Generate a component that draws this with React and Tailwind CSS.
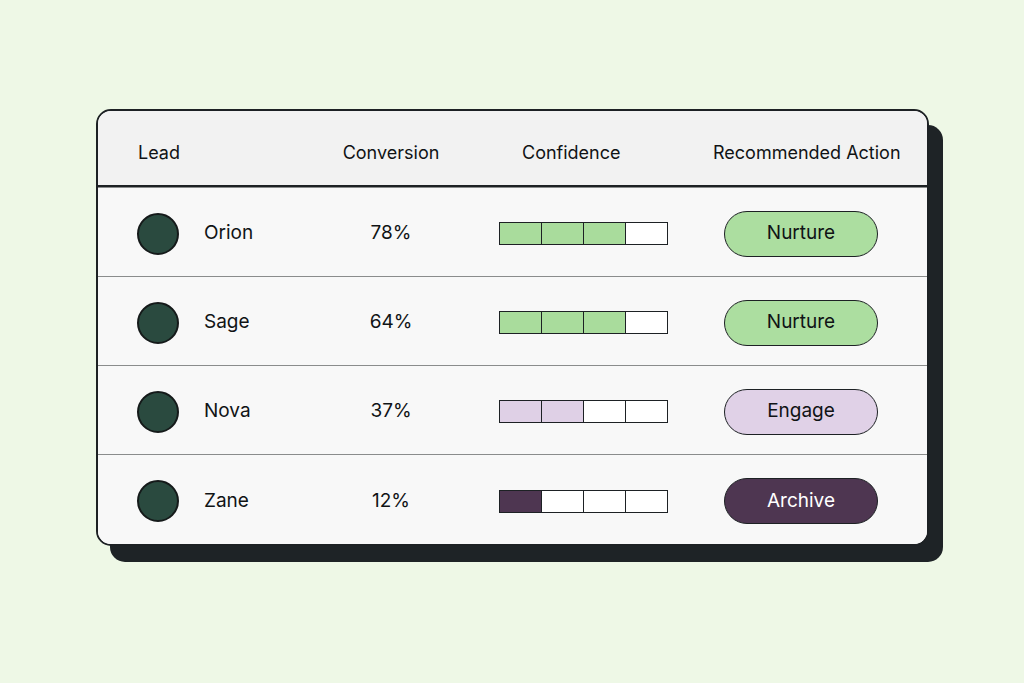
import React from 'react';

const leads = [
  { name: 'Orion', pct: '78%', filled: 3, tone: 'green', action: 'Nurture' },
  { name: 'Sage', pct: '64%', filled: 3, tone: 'green', action: 'Nurture' },
  { name: 'Nova', pct: '37%', filled: 2, tone: 'lilac', action: 'Engage' },
  { name: 'Zane', pct: '12%', filled: 1, tone: 'plum', action: 'Archive' },
];

const segFill = {
  green: 'bg-[#a9dc9c]',
  lilac: 'bg-[#dfd0e6]',
  plum: 'bg-[#4e3651]',
};

const pillStyle = {
  green: 'bg-[#acdea0] text-[#101315]',
  lilac: 'bg-[#e0d1e7] text-[#101315]',
  plum: 'bg-[#4e3651] text-white',
};

function ConfidenceBar({ filled, tone }) {
  return (
    <div className="flex w-[169px] h-[23px] border-[1.5px] border-[#1d2124] bg-white">
      {[0, 1, 2, 3].map((i) => (
        <div
          key={i}
          className={`flex-1 ${i > 0 ? 'border-l-[1.5px] border-[#1d2124]' : ''} ${i < filled ? segFill[tone] : 'bg-white'}`}
        />
      ))}
    </div>
  );
}

function LeadRow({ lead, last }) {
  return (
    <div className={`flex items-center ${last ? 'h-[90px]' : 'h-[89px]'} border-t border-[#8a8c8c] bg-[#f8f8f8] pt-[3px]`}>
      <div className="w-[222px] pl-[39px] flex items-center gap-[25px]">
        <div className="w-[42px] h-[42px] rounded-full bg-[#2a4a3f] border-2 border-[#151a1a]" />
        <span className="text-[19px]">{lead.name}</span>
      </div>
      <div className="w-[142px] text-center text-[19px]">{lead.pct}</div>
      <div className="w-[251px] pl-[37px]">
        <ConfidenceBar filled={lead.filled} tone={lead.tone} />
      </div>
      <div className="flex-1 pl-[11px]">
        <div
          className={`w-[154px] h-[46px] rounded-full border-[1.5px] border-[#1d2124] flex items-center justify-center text-[19px] ${pillStyle[lead.tone]}`}
        >
          {lead.action}
        </div>
      </div>
    </div>
  );
}

export default function App() {
  return (
    <div
      className="w-screen h-screen bg-[#eef8e6] pt-[109px] pl-[96px] text-[#101315] font-normal overflow-hidden"
      style={{ fontFamily: 'Inter, "Noto Sans", sans-serif' }}
    >
      <div className="w-[833px] rounded-[15px] border-2 border-[#1d2124] bg-[#f8f8f8] overflow-hidden shadow-[14px_16px_0_0_#1e2326]">
        {/* header */}
        <div className="flex items-center h-[76px] pt-[8px] bg-[#f2f2f2] border-b-2 border-[#1d2124] text-[18px]">
          <div className="w-[222px] pl-[40px]">Lead</div>
          <div className="w-[142px] text-center">Conversion</div>
          <div className="w-[251px] pl-[60px]">Confidence</div>
          <div className="flex-1">Recommended Action</div>
        </div>
        {leads.map((lead, i) => (
          <LeadRow key={lead.name} lead={lead} last={i === leads.length - 1} />
        ))}
      </div>
    </div>
  );
}
